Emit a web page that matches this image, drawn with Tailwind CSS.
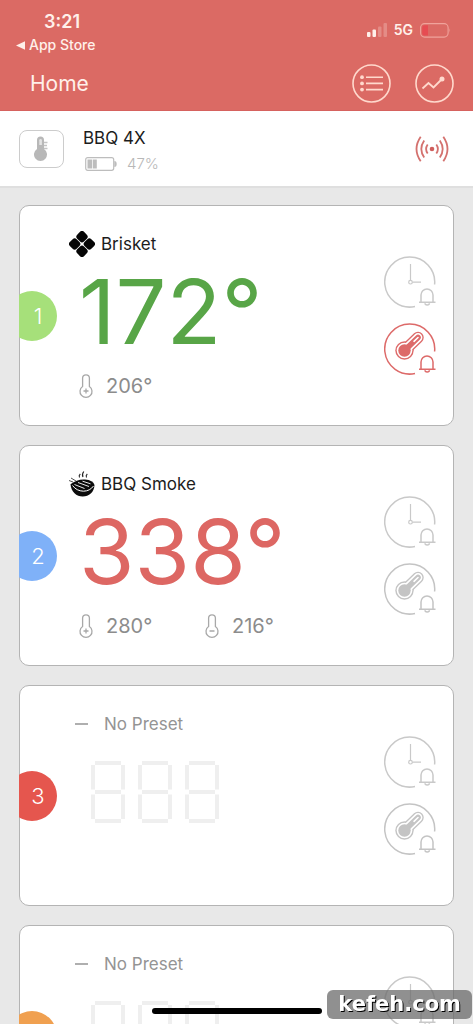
<!DOCTYPE html>
<html lang="en">
<head>
<meta charset="utf-8">
<meta name="viewport" content="width=device-width, initial-scale=1">
<title>Home</title>
<script src="https://cdn.jsdelivr.net/npm/@tailwindcss/browser@4"></script>
</head>
<body class="font-[Inter,'Liberation_Sans',sans-serif] bg-[#e8e8e8] text-[#1c1c1c]">
<svg class="hidden" aria-hidden="true">
  <symbol id="clock" viewBox="0 0 54 54">
    <g fill="none" stroke="currentColor" stroke-width="1.5">
      <path d="M50.6 28.5A25 25 0 1 0 31 50.5"/>
      <path d="M26.5 8v16M28.5 26.2H37" stroke-width="1.2"/>
      <circle cx="26.5" cy="26.2" r="1.8" stroke-width="1.2"/>
      <path d="M35 46.3h16.5M37 46v-7a6 6 0 0 1 12 0v7M41 47.3a2.2 1.6 0 0 0 4.4 0"/>
    </g>
  </symbol>
  <symbol id="probe" viewBox="0 0 54 54">
    <g fill="none" stroke="currentColor" stroke-width="1.5">
      <path d="M50.6 28.5A25 25 0 1 0 31 50.5"/>
      <path d="M35 46.3h16.5M37 46v-7a6 6 0 0 1 12 0v7M41 47.3a2.2 1.6 0 0 0 4.4 0"/>
    </g>
    <g stroke-linecap="round">
      <path d="M20.5 27.500 34 14.500" stroke="currentColor" stroke-width="11.500"/>
      <circle cx="20.500" cy="27.500" r="9.200" fill="currentColor"/>
      <path d="M20.500 27.500 34 14.500" stroke="#fff" stroke-width="8.800"/>
      <circle cx="20.500" cy="27.500" r="7.800" fill="#fff"/>
      <path d="M20.500 27.500 34 14.500" stroke="currentColor" stroke-width="5.600"/>
      <circle cx="20.500" cy="27.500" r="6.200" fill="currentColor"/>
      <path d="m30 18.300 4-3.800" stroke="#fff" stroke-width="1.600"/>
    </g>
  </symbol>
  <symbol id="high" viewBox="0 0 14 25">
    <path d="M3.6 12.500V4.200a3.400 3.400 0 0 1 6.800 0v8.300a6 6 0 1 1-6.800 0ZM7 14.500v5M4.500 17h5" fill="none" stroke="currentColor" stroke-width="1.300"/>
  </symbol>
  <symbol id="low" viewBox="0 0 14 25">
    <path d="M3.600 12.500V4.200a3.400 3.400 0 0 1 6.800 0v8.300a6 6 0 1 1-6.800 0ZM4.500 17h5" fill="none" stroke="currentColor" stroke-width="1.300"/>
  </symbol>
  <symbol id="eight" viewBox="0 0 36 64">
    <path d="M5 3h26M5 61h26M5 32h26M3 5v24.500M33 5v24.500M3 34.500V59M33 34.500V59" fill="none" stroke="currentColor" stroke-width="4"/>
  </symbol>
</svg>

<div class="h-screen overflow-hidden flex flex-col">
  <header class="bg-[#db6a64] text-[#fff0ea] border-b border-[#d6625e] shrink-0">
    <div class="flex items-start justify-between pl-4 pr-[22px] pt-3">
      <div>
        <div class="pl-7 text-[18px] leading-5 font-semibold">3:21</div>
        <a href="#" class="mt-1 flex items-center gap-1 text-[14px] leading-[18px] font-medium">
          <svg class="w-[9px] h-[9px]" viewBox="0 0 9 9" aria-hidden="true"><path d="M0 4.500 9 .3v8.400Z" fill="currentColor"/></svg>
          App Store
        </a>
      </div>
      <div class="flex items-center gap-[7px] pt-[9px]">
        <svg class="w-5 h-[14px]" viewBox="0 0 20 14" aria-label="Signal"><g fill="currentColor"><rect y="9" width="3.500" height="5" rx="1"/><rect x="5.500" y="6.500" width="3.500" height="7.500" rx="1"/><g opacity=".25"><rect x="11" y="3.500" width="3.500" height="10.500" rx="1"/><rect x="16.500" width="3.500" height="14" rx="1"/></g></g></svg>
        <span class="text-[14px] leading-[18px] font-semibold">5G</span>
        <svg class="w-[31px] h-[15px]" viewBox="0 0 31 15" aria-label="Battery"><rect x=".6" y=".6" width="27.500" height="13.500" rx="4" fill="none" stroke="#f0a39b" stroke-width="1.100"/><path d="M4.500 2.200H8v10.300H4.500a2.300 2.300 0 0 1-2.300-2.300V4.500a2.300 2.300 0 0 1 2.300-2.300Z" fill="#e64c52"/><path d="M29.500 5.200q1.500 2.200 0 4.400Z" fill="#f0a39b"/></svg>
      </div>
    </div>
    <div class="flex items-center pl-[30px] pr-[19px] pt-2.5 pb-[7px]">
      <h1 class="flex-1 text-[21px] leading-[39px]">Home</h1>
      <div class="flex gap-6">
        <button aria-label="List"><svg class="block w-[39px] h-[39px]" viewBox="0 0 39 39"><g fill="none" stroke="#ffd9cd" stroke-width="1.600"><circle cx="19.500" cy="19.500" r="18.500"/><path d="M14 13.200h17M14 19.400h17M14 25.600h17"/></g><g fill="#ffd9cd"><circle cx="10" cy="13.200" r="1.900"/><circle cx="10" cy="19.400" r="1.900"/><circle cx="10" cy="25.600" r="1.900"/></g></svg></button>
        <button aria-label="Graph"><svg class="block w-[39px] h-[39px]" viewBox="0 0 39 39"><g fill="none" stroke="#ffd9cd" stroke-width="1.800"><circle cx="19.500" cy="19.500" r="18.500" stroke-width="1.600"/><path d="m7.500 24.500 6-5.500 5 4.500 8-8"/></g><circle cx="27" cy="15" r="2.500" fill="#ffd9cd"/></svg></button>
      </div>
    </div>
  </header>

  <section class="bg-white border-b-2 border-[#dfdfdf] flex items-center pl-[19px] pr-6 h-[77px] shrink-0">
    <div class="w-[45px] h-[38px] rounded-lg border border-[#cccccc] flex items-center justify-center">
      <svg class="w-[15px] h-[26px]" viewBox="0 0 15 26" aria-hidden="true"><path d="M3 13V4a3.500 3.500 0 0 1 7 0v9a6.500 6.500 0 1 1-7 0Z" fill="#b8b8b8"/><path d="M5.300 9V4.300a1.300 1.300 0 0 1 2.600 0V9" fill="#e4e4e4"/><path d="M10 6.500h3.500M10 9.500h3M10 12.500h3.500" stroke="#c4c4c4" stroke-width="1.300"/></svg>
    </div>
    <div class="flex-1 pl-[19px] pt-[3px]">
      <h2 class="text-[17px] leading-6">BBQ 4X</h2>
      <div class="flex items-center gap-[10px] pl-[2px] pt-1 text-[15px] leading-5 font-light text-[#b8b8b8]">
        <svg class="w-[32px] h-[14px]" viewBox="0 0 32 14" aria-hidden="true"><rect x=".7" y=".7" width="28" height="12.600" rx="2" fill="none" stroke="#bdbdbd" stroke-width="1.200"/><path d="M2.500 2.500h4.800v9H2.500ZM8 2.500h3.800v9H8Z" fill="#bdbdbd"/><path d="M29.300 4q2.400 0 2.400 3t-2.400 3Z" fill="#bdbdbd"/></svg>
        47%
      </div>
    </div>
    <svg class="w-[34px] h-[28px]" viewBox="0 0 34 28" aria-label="Connected"><circle cx="17" cy="14" r="2.300" fill="#cf5f5d"/><g fill="none" stroke="#d4716e" stroke-width="1.800"><path d="M12.700 9.500q-3.200 4.500 0 9M21.300 9.500q3.200 4.500 0 9M9.200 5.500q-5.800 8.500 0 17M24.800 5.500q5.800 8.500 0 17M5.700 1.800q-8.400 12.200 0 24.400M28.300 1.800q8.400 12.200 0 24.400"/></g></svg>
  </section>

  <main class="flex-1 min-h-0 overflow-hidden px-[19px] pt-[17px] flex flex-col gap-[19px]">
    <article class="bg-white border border-[#b4b4b4] rounded-[10px] flex items-center pr-[15px] h-[221px] shrink-0">
      <div class="-ml-px w-[38px] overflow-hidden shrink-0"><div class="-ml-3 w-[50px] h-[50px] rounded-full bg-[#a6e07a] text-white text-[22px] leading-[50px] pl-3 text-center font-light">1</div></div>
      <div class="flex-1 self-stretch pl-3 pt-[25px]">
        <h3 class="flex items-center gap-[6px] text-[17px] leading-[26px]">
          <svg class="w-[26px] h-[26px]" viewBox="0 0 26 26" aria-hidden="true"><g transform="rotate(45 13 13)" fill="#060606"><rect x="3" y="3" width="9.600" height="9.600" rx="2.800"/><rect x="13.400" y="3" width="9.600" height="9.600" rx="2.800"/><rect x="3" y="13.400" width="9.600" height="9.600" rx="2.800"/><rect x="13.400" y="13.400" width="9.600" height="9.600" rx="2.800"/></g></svg>
          Brisket
        </h3>
        <p class="pl-[10px] pt-[9px] text-[90px] leading-[92px] text-[#58a547]">172°</p>
        <div class="flex pl-[10px] pt-[14px] text-[20px] leading-7 text-[#8c8c8c]">
          <span class="flex items-center gap-[13px] w-[126px]"><svg class="w-[14px] h-[25px] text-[#a8a8a8]"><use href="#high"/></svg>206°</span>
        </div>
      </div>
      <div class="flex flex-col gap-[13px] pt-[2px]">
        <button aria-label="Timer alarm" class="text-[#c9c9c9]"><svg class="block w-[54px] h-[54px]"><use href="#clock"/></svg></button>
        <button aria-label="Temperature alarm" class="text-[#dd6a69]"><svg class="block w-[54px] h-[54px]"><use href="#probe"/></svg></button>
      </div>
    </article>

    <article class="bg-white border border-[#b4b4b4] rounded-[10px] flex items-center pr-[15px] h-[221px] shrink-0">
      <div class="-ml-px w-[38px] overflow-hidden shrink-0"><div class="-ml-3 w-[50px] h-[50px] rounded-full bg-[#7fb1f8] text-white text-[22px] leading-[50px] pl-3 text-center font-light">2</div></div>
      <div class="flex-1 self-stretch pl-3 pt-[25px]">
        <h3 class="flex items-center gap-[6px] text-[17px] leading-[26px]">
          <svg class="w-[26px] h-[26px]" viewBox="0 0 26 26" aria-hidden="true"><path d="M1.500 13.200Q8 8 16 8.500q8 .5 9.500 5.500c-.5 7.500-5.500 11.500-11.800 11.500S2.200 21 1.500 13.200Z" fill="#0c0c0c"/><path d="M3.500 14.500q4 5.500 11 5.700 6.500-.2 10-5.200" fill="none" stroke="#fff" stroke-width="1"/><path d="m5.500 13.500 10 4M9 11.500l11 4M13.500 10.200l8 2.600" stroke="#fff" stroke-width=".9"/><path d="M0 9.500 4 11M2 7l5 3" stroke="#555" stroke-width="1"/><path d="M10.500 6.500q-1-2 .8-3.500M14 6q-1.500-2.500.8-5.500M17.500 6.500q-1-2 .8-3.500" fill="none" stroke="#222" stroke-width="1.100"/></svg>
          BBQ Smoke
        </h3>
        <p class="pl-[10px] pt-[9px] text-[90px] leading-[92px] text-[#dd6763]">338°</p>
        <div class="flex pl-[10px] pt-[14px] text-[20px] leading-7 text-[#8c8c8c]">
          <span class="flex items-center gap-[13px] w-[126px]"><svg class="w-[14px] h-[25px] text-[#a8a8a8]"><use href="#high"/></svg>280°</span>
          <span class="flex items-center gap-[13px]"><svg class="w-[14px] h-[25px] text-[#a8a8a8]"><use href="#low"/></svg>216°</span>
        </div>
      </div>
      <div class="flex flex-col gap-[13px] pt-[2px]">
        <button aria-label="Timer alarm" class="text-[#c9c9c9]"><svg class="block w-[54px] h-[54px]"><use href="#clock"/></svg></button>
        <button aria-label="Temperature alarm" class="text-[#c4c4c4]"><svg class="block w-[54px] h-[54px]"><use href="#probe"/></svg></button>
      </div>
    </article>

    <article class="bg-white border border-[#b4b4b4] rounded-[10px] flex items-center pr-[15px] h-[221px] shrink-0">
      <div class="-ml-px w-[38px] overflow-hidden shrink-0"><div class="-ml-3 w-[50px] h-[50px] rounded-full bg-[#e5564e] text-white text-[22px] leading-[50px] pl-3 text-center font-light">3</div></div>
      <div class="flex-1 self-stretch pl-[18px] pt-[25px]">
        <h3 class="flex items-center gap-[16px] text-[17px] leading-[26px] text-[#949494]">
          <svg class="w-[13px] h-[2px]" viewBox="0 0 13 2" aria-hidden="true"><path d="M0 1h13" stroke="currentColor" stroke-width="1.500"/></svg>
          No Preset
        </h3>
        <div class="flex gap-[11px] pl-[15px] pt-[23px] text-[#efefef]" role="img" aria-label="No reading">
          <svg class="w-[36px] h-[64px]"><use href="#eight"/></svg><svg class="w-[36px] h-[64px]"><use href="#eight"/></svg><svg class="w-[36px] h-[64px]"><use href="#eight"/></svg>
        </div>
      </div>
      <div class="flex flex-col gap-[13px] pt-[2px]">
        <button aria-label="Timer alarm" class="text-[#c9c9c9]"><svg class="block w-[54px] h-[54px]"><use href="#clock"/></svg></button>
        <button aria-label="Temperature alarm" class="text-[#c4c4c4]"><svg class="block w-[54px] h-[54px]"><use href="#probe"/></svg></button>
      </div>
    </article>

    <article class="bg-white border border-[#b4b4b4] rounded-[10px] flex items-center pr-[15px] h-[221px] shrink-0">
      <div class="-ml-px w-[38px] overflow-hidden shrink-0"><div class="-ml-3 w-[50px] h-[50px] rounded-full bg-[#f0a050]"></div></div>
      <div class="flex-1 self-stretch pl-[18px] pt-[25px]">
        <h3 class="flex items-center gap-[16px] text-[17px] leading-[26px] text-[#949494]">
          <svg class="w-[13px] h-[2px]" viewBox="0 0 13 2" aria-hidden="true"><path d="M0 1h13" stroke="currentColor" stroke-width="1.500"/></svg>
          No Preset
        </h3>
        <div class="flex gap-[11px] pl-[15px] pt-[23px] text-[#efefef]" role="img" aria-label="No reading">
          <svg class="w-[36px] h-[64px]"><use href="#eight"/></svg><svg class="w-[36px] h-[64px]"><use href="#eight"/></svg><svg class="w-[36px] h-[64px]"><use href="#eight"/></svg>
        </div>
      </div>
      <div class="flex flex-col gap-[13px] pt-[2px]">
        <button aria-label="Timer alarm" class="text-[#c9c9c9]"><svg class="block w-[54px] h-[54px]"><use href="#clock"/></svg></button>
        <button aria-label="Temperature alarm" class="text-[#c4c4c4]"><svg class="block w-[54px] h-[54px]"><use href="#probe"/></svg></button>
      </div>
    </article>
  </main>
</div>

<div class="fixed bottom-[10px] left-1/2 -translate-x-1/2 w-[170px] h-[6px] rounded-full bg-black"></div>
<div class="fixed bottom-[5px] right-px rounded-md bg-[#6b6b6b]/75 px-[11px] font-['DejaVu_Sans',sans-serif] font-bold text-[21px] leading-[29px] text-white [text-shadow:1px_1px_0_#000]">kefeh.com</div>
</body>
</html>
